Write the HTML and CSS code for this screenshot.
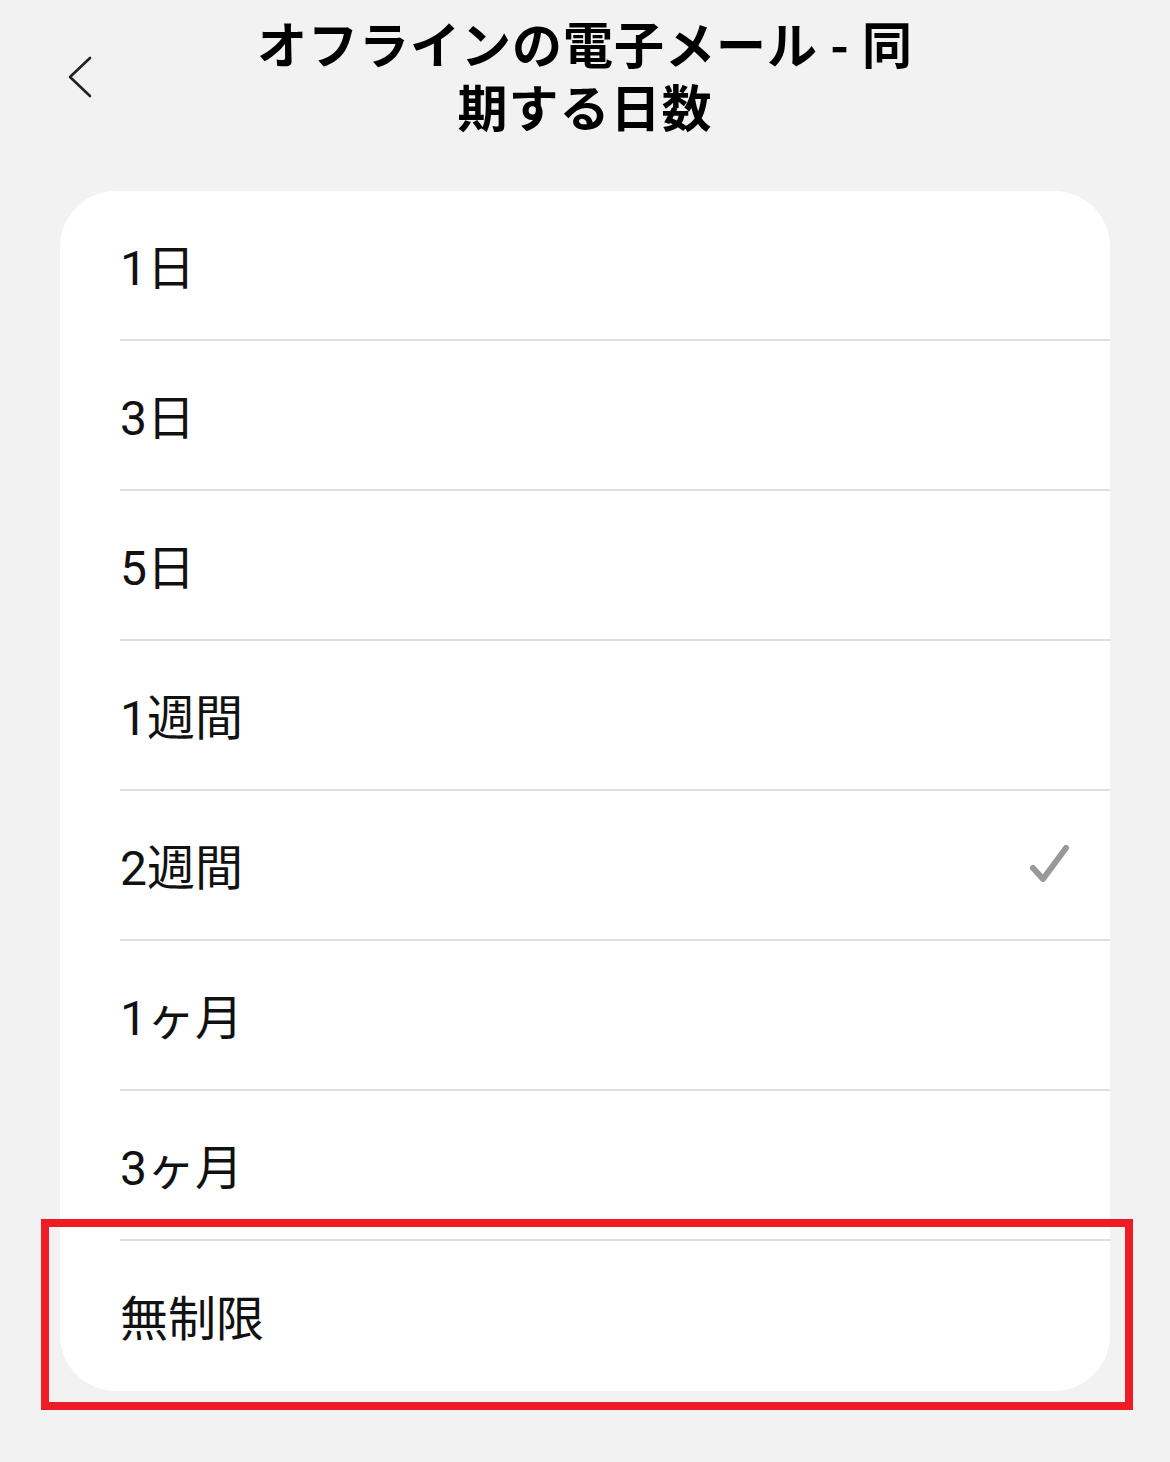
FILE: index.html
```html
<!DOCTYPE html>
<html lang="ja">
<head>
<meta charset="utf-8">
<link rel="stylesheet" href="styles.css">
</head>
<body>
<div class="page">
  <header class="header">
    <button class="back" aria-label="戻る">
      <svg width="30" height="42" viewBox="0 0 30 42"><path d="M24 2 L4 21 L24 40" fill="none" stroke="#222" stroke-width="2.6" stroke-linecap="round" stroke-linejoin="round"/></svg>
    </button>
    <h1 class="title">オフラインの電子メール - 同期する日数</h1>
  </header>
  <div class="card-wrap">
    <ul class="card">
      <li class="row"><span>1日</span></li>
      <li class="row"><span>3日</span></li>
      <li class="row"><span>5日</span></li>
      <li class="row"><span>1週間</span></li>
      <li class="row"><span>2週間</span>
        <svg class="check" width="44" height="44" viewBox="0 0 44 44"><path d="M5 24 L15 35 L38 4" fill="none" stroke="#999" stroke-width="6" stroke-linecap="round" stroke-linejoin="round"/></svg>
      </li>
      <li class="row"><span>1ヶ月</span></li>
      <li class="row"><span>3ヶ月</span></li>
      <li class="row last"><span>無制限</span></li>
    </ul>
    <div class="highlight"></div>
  </div>
</div>
</body>
</html>
```

FILE: styles.css
```css
html, body {
  margin: 0;
  padding: 0;
  background: #f2f2f2;
}
body {
  font-family: "Noto Sans CJK JP", "Noto Sans", sans-serif;
  color: #111;
}
.page {
  width: 1170px;
  height: 1462px;
  position: relative;
}
.header {
  height: 191px;
  position: relative;
  display: flex;
  justify-content: center;
}
.back {
  position: absolute;
  left: 66px;
  top: 56px;
  padding: 0;
  border: none;
  background: none;
  width: 30px;
  height: 42px;
}
.title {
  margin: 11px 0 0 0;
  width: 690px;
  text-align: center;
  font-size: 50px;
  line-height: 63px;
  font-weight: 700;
  letter-spacing: 1px;
  color: #000;
}
.card-wrap {
  position: relative;
  margin: 0 60px;
}
.card {
  list-style: none;
  margin: 0;
  padding: 0;
  background: #fff;
  border-radius: 56px;
  overflow: hidden;
}
.row {
  height: 150px;
  margin-left: 60px;
  border-bottom: 2px solid #dedede;
  box-sizing: border-box;
  display: flex;
  align-items: center;
  justify-content: space-between;
  padding-right: 38px;
  font-family: "Roboto", "Noto Sans CJK JP", sans-serif;
  font-size: 48px;
  color: #111;
}
.row span {
  display: block;
  margin-top: -3px;
}
.row.last {
  border-bottom: none;
}
.check {
  display: block;
  margin-top: 2px;
}
.highlight {
  position: absolute;
  left: -19px;
  top: 1028px;
  width: 1076px;
  height: 175px;
  border: 8px solid #ee1c25;
}
```
